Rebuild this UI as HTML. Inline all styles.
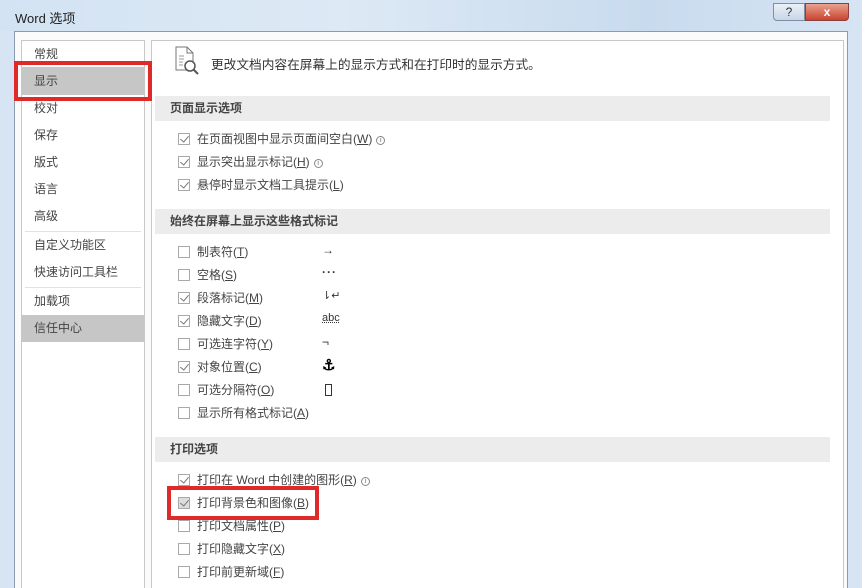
<!DOCTYPE html>
<html><head><meta charset="utf-8"><style>
*{margin:0;padding:0;box-sizing:border-box}
body{width:862px;height:588px;overflow:hidden;position:relative;background:#d6e4f3;font-family:"Liberation Sans","Noto Sans CJK SC",sans-serif;font-size:12px;color:#444}
.a{position:absolute}
.title{left:0;top:0;width:862px;height:31px;background:linear-gradient(90deg,#d3e3f3 0%,#dde9f5 40%,#c8dbee 75%,#d6e4f3 100%)}
.client{left:14px;top:31px;width:834px;height:557px;background:#fbfbfb;border:1px solid #8a9bb0;border-bottom:none}
.lp{left:21px;top:40px;width:124px;height:548px;border:1px solid #c8c8c8;border-bottom:none;background:#fff}
.rp{left:151px;top:40px;width:693px;height:548px;border:1px solid #c8c8c8;border-bottom:none;background:#fff}
.li{left:34px;font-size:12px;color:#444;line-height:14px}
.bar{left:155px;width:675px;height:25px;background:#ececec;font-weight:bold;font-size:12px;color:#444;padding-left:15px;line-height:25px}
.it{left:178px;height:14px;line-height:14px;white-space:nowrap}
.cb{position:absolute;left:0;top:0;width:12px;height:12px;border:1px solid #a8a8a8;background:#fff}
.cb.c::after{content:"";position:absolute;left:3px;top:0px;width:4px;height:7px;border:solid #777;border-width:0 1.5px 1.5px 0;transform:rotate(40deg)}
.it span.t{position:absolute;left:19px;top:-1px;color:#444}
.sym{left:322px;font-size:12px;color:#333}
u{text-decoration:underline}
.i{display:inline-block;width:9px;height:9px;border:1px solid #888;border-radius:50%;font-size:7px;line-height:7px;text-align:center;color:#666;margin-left:4px;vertical-align:1px}
</style></head><body>
<div class="a title"></div>
<div class="a" style="left:15px;top:8px;font-size:13px;color:#222">Word 选项</div>
<div class="a" style="left:773px;top:3px;width:32px;height:18px;border:1px solid #7d8ea5;border-radius:0 0 0 4px;background:linear-gradient(#eaf0f7,#c9d6e5);text-align:center;font-size:12px;color:#333;line-height:16px">?</div>
<div class="a" style="left:805px;top:3px;width:44px;height:18px;border:1px solid #8a4040;border-radius:0 0 4px 0;background:linear-gradient(#e9a290,#c9432f);text-align:center;font-size:12px;font-weight:bold;color:#fff;line-height:16px">x</div>
<div class="a client"></div>
<div class="a lp"></div>
<div class="a rp"></div>
<div class="a" style="left:22px;top:67px;width:122px;height:28px;background:#c6c6c6"></div>
<div class="a" style="left:22px;top:315px;width:122px;height:27px;background:#c6c6c6"></div>
<div class="a" style="left:14px;top:61px;width:138px;height:40px;border:4px solid #e02a2a"></div>
<div class="a" style="left:25px;top:231px;width:116px;height:1px;background:#e2e2e2"></div>
<div class="a" style="left:25px;top:287px;width:116px;height:1px;background:#e2e2e2"></div>
<div class="a li" style="top:47px">常规</div>
<div class="a li" style="top:74px">显示</div>
<div class="a li" style="top:101px">校对</div>
<div class="a li" style="top:128px">保存</div>
<div class="a li" style="top:155px">版式</div>
<div class="a li" style="top:182px">语言</div>
<div class="a li" style="top:209px">高级</div>
<div class="a li" style="top:238px">自定义功能区</div>
<div class="a li" style="top:265px">快速访问工具栏</div>
<div class="a li" style="top:294px">加载项</div>
<div class="a li" style="top:321px">信任中心</div>
<svg class="a" style="left:175px;top:46px" width="28" height="30" viewBox="0 0 28 30"><path d="M1 1H12L18 7V24H1Z" fill="#fff" stroke="#777"/><path d="M12 1V7H18" fill="none" stroke="#777"/><path d="M4 10H9M4 13H9M4 16H8M4 19H8" stroke="#999"/><circle cx="15" cy="20" r="5" fill="#fff" stroke="#555" stroke-width="1.5"/><path d="M18.5 23.5L23 28" stroke="#555" stroke-width="2"/></svg>
<div class="a" style="left:211px;top:54px;font-size:12.7px;color:#333">更改文档内容在屏幕上的显示方式和在打印时的显示方式。</div>
<div class="a bar" style="top:96px">页面显示选项</div>
<div class="a it" style="top:133px"><div class="cb c"></div><span class="t">在页面视图中显示页面间空白(<u>W</u>)<span class="i">i</span></span></div>
<div class="a it" style="top:156px"><div class="cb c"></div><span class="t">显示突出显示标记(<u>H</u>)<span class="i">i</span></span></div>
<div class="a it" style="top:179px"><div class="cb c"></div><span class="t">悬停时显示文档工具提示(<u>L</u>)</span></div>
<div class="a bar" style="top:209px">始终在屏幕上显示这些格式标记</div>
<div class="a it" style="top:246px"><div class="cb"></div><span class="t">制表符(<u>T</u>)</span></div>
<div class="a it" style="top:269px"><div class="cb"></div><span class="t">空格(<u>S</u>)</span></div>
<div class="a it" style="top:292px"><div class="cb c"></div><span class="t">段落标记(<u>M</u>)</span></div>
<div class="a it" style="top:315px"><div class="cb c"></div><span class="t">隐藏文字(<u>D</u>)</span></div>
<div class="a it" style="top:338px"><div class="cb"></div><span class="t">可选连字符(<u>Y</u>)</span></div>
<div class="a it" style="top:361px"><div class="cb c"></div><span class="t">对象位置(<u>C</u>)</span></div>
<div class="a it" style="top:384px"><div class="cb"></div><span class="t">可选分隔符(<u>O</u>)</span></div>
<div class="a it" style="top:407px"><div class="cb"></div><span class="t">显示所有格式标记(<u>A</u>)</span></div>
<div class="a sym" style="top:243px">→</div>
<div class="a sym" style="top:265px;letter-spacing:1px;font-weight:bold">···</div>
<div class="a sym" style="top:289px;font-size:11px">⇂↵</div>
<div class="a sym" style="top:312px;font-size:11px;text-decoration:underline dotted">abc</div>
<div class="a sym" style="top:335px">¬</div>
<div class="a sym" style="top:356px;font-size:15px;font-weight:bold;color:#000">⚓︎</div>
<div class="a" style="left:325px;top:384px;width:7px;height:12px;border:1px solid #333"></div>
<div class="a bar" style="top:437px">打印选项</div>
<div class="a it" style="top:474px"><div class="cb c"></div><span class="t">打印在 Word 中创建的图形(<u>R</u>)<span class="i">i</span></span></div>
<div class="a it" style="top:497px"><div class="cb c" style="background:#ddd"></div><span class="t">打印背景色和图像(<u>B</u>)</span></div>
<div class="a it" style="top:520px"><div class="cb"></div><span class="t">打印文档属性(<u>P</u>)</span></div>
<div class="a it" style="top:543px"><div class="cb"></div><span class="t">打印隐藏文字(<u>X</u>)</span></div>
<div class="a it" style="top:566px"><div class="cb"></div><span class="t">打印前更新域(<u>F</u>)</span></div>
<div class="a" style="left:167px;top:486px;width:152px;height:34px;border:4px solid #e02a2a"></div>
</body></html>
